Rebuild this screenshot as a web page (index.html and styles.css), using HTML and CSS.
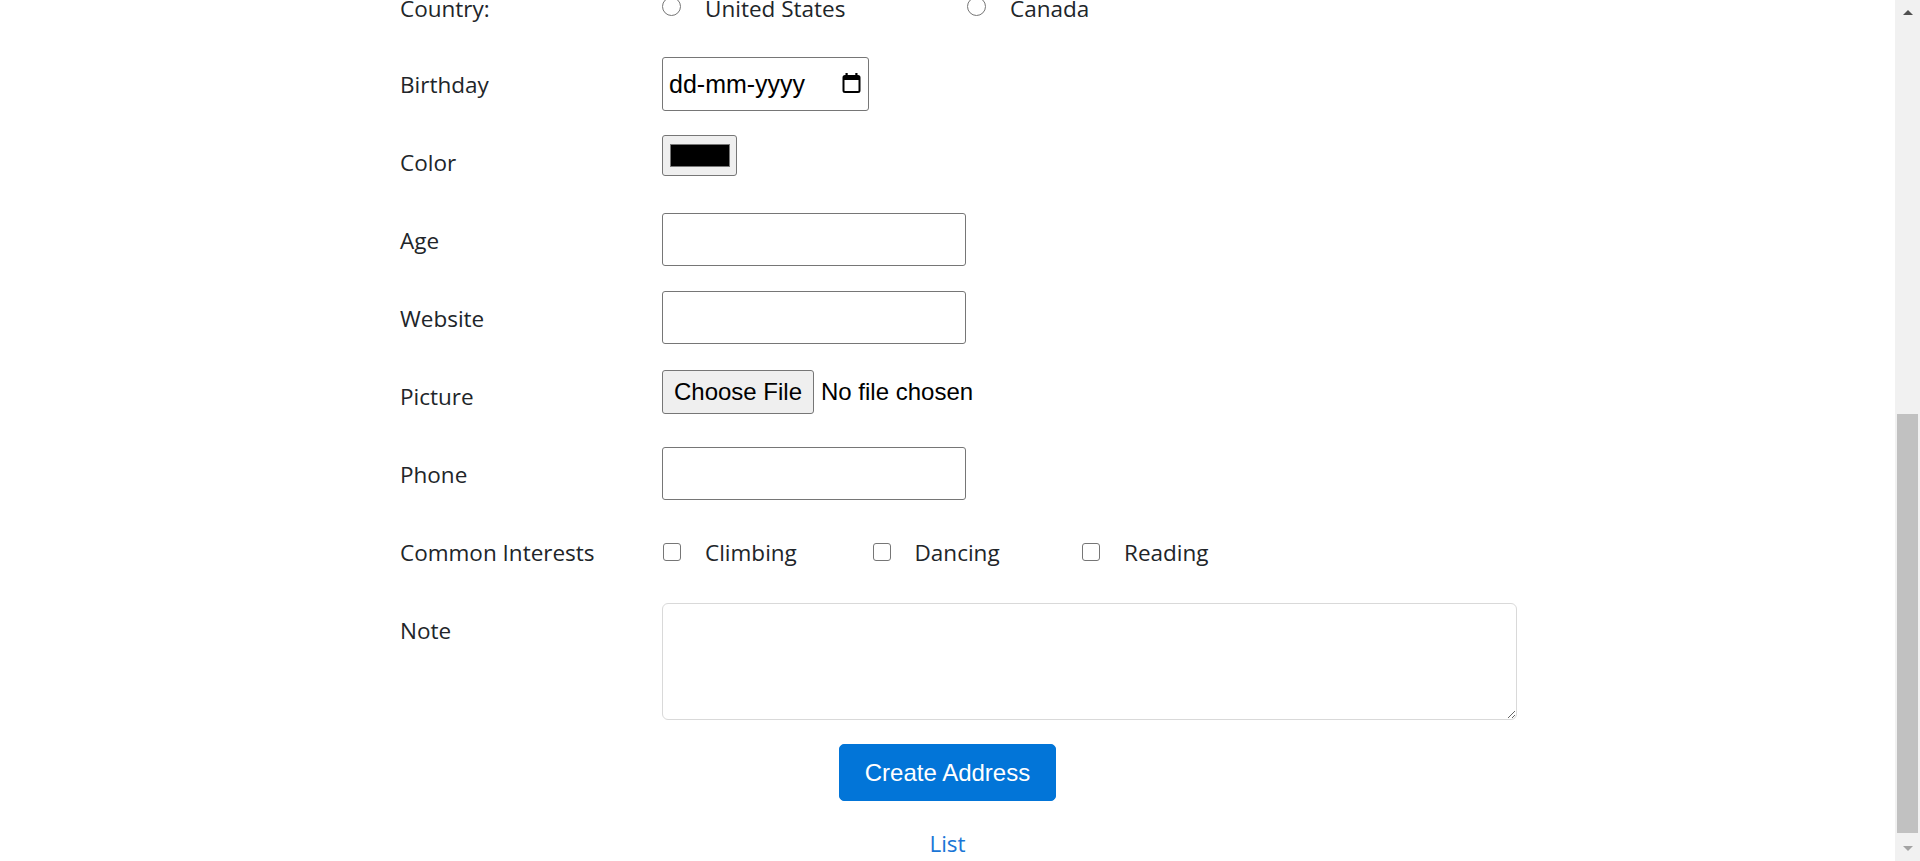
FILE: index.html
```html
<!DOCTYPE html>
<html lang="en">
<head>
<meta charset="utf-8">
<title>Create Address</title>
<link rel="stylesheet" href="styles.css">
</head>
<body>
<div class="viewport">
  <main class="content">
    <div class="container">
      <form class="address-form">
        <div class="form-row row-country">
          <label class="form-label">Country:</label>
          <div class="options">
            <label class="option option-radio"><span class="radio"></span><span class="option-text">United States</span></label>
            <label class="option option-radio"><span class="radio"></span><span class="option-text">Canada</span></label>
          </div>
        </div>
        <div class="form-row">
          <label class="form-label">Birthday</label>
          <div class="date-input">
            <span class="date-text">dd-mm-yyyy</span>
            <svg class="cal-icon" width="19" height="20" viewBox="0 0 19 20" aria-hidden="true">
              <rect x="3.5" y="0" width="2.2" height="4" fill="#000"/>
              <rect x="13.3" y="0" width="2.2" height="4" fill="#000"/>
              <rect x="1.5" y="3" width="16" height="16" rx="1.5" fill="none" stroke="#000" stroke-width="2"/>
              <rect x="1.5" y="3" width="16" height="4" fill="#000"/>
            </svg>
          </div>
        </div>
        <div class="form-row">
          <label class="form-label">Color</label>
          <div class="color-input"><span class="color-swatch"></span></div>
        </div>
        <div class="form-row">
          <label class="form-label">Age</label>
          <input class="text-input" type="text">
        </div>
        <div class="form-row">
          <label class="form-label">Website</label>
          <input class="text-input" type="text">
        </div>
        <div class="form-row">
          <label class="form-label">Picture</label>
          <div class="file-input">
            <button type="button" class="file-btn">Choose File</button>
            <span class="file-status">No file chosen</span>
          </div>
        </div>
        <div class="form-row">
          <label class="form-label">Phone</label>
          <input class="text-input" type="text">
        </div>
        <div class="form-row">
          <label class="form-label">Common Interests</label>
          <div class="options">
            <label class="option option-check"><span class="checkbox"></span><span class="option-text">Climbing</span></label>
            <label class="option option-check"><span class="checkbox"></span><span class="option-text">Dancing</span></label>
            <label class="option option-check"><span class="checkbox"></span><span class="option-text">Reading</span></label>
          </div>
        </div>
        <div class="form-row">
          <label class="form-label">Note</label>
          <textarea class="note-input"></textarea>
        </div>
        <div class="actions">
          <button type="button" class="btn-primary">Create Address</button>
        </div>
      </form>
      <div class="links"><a href="#" class="list-link">List</a></div>
    </div>
  </main>
  <div class="scrollbar">
    <div class="sb-button"><span class="sb-arrow-up"></span></div>
    <div class="sb-track"><div class="sb-thumb"></div></div>
    <div class="sb-button"><span class="sb-arrow-down"></span></div>
  </div>
</div>
</body>
</html>
```

FILE: styles.css
```css
html, body {
  margin: 0;
  padding: 0;
  height: 100%;
  overflow: hidden;
  background: #fff;
}

body {
  font-family: "Open Sans", "Noto Sans", sans-serif;
  font-size: 22.5px;
  color: #212529;
}

.viewport {
  display: flex;
  height: 861px;
}

.content {
  flex: 1;
  overflow: hidden;
  min-width: 0;
}

.container {
  width: 1095px;
  margin: -19px auto 0;
}

.form-row {
  display: flex;
  align-items: flex-start;
  min-height: 54px;
  margin-bottom: 24px;
}

.row-country {
  min-height: 52px;
}

.form-label {
  width: 262px;
  flex: none;
  padding-top: 9.5px;
  line-height: 36px;
}

.options {
  display: flex;
  padding-top: 9.5px;
}

.option {
  display: flex;
  align-items: center;
  line-height: 36px;
}

.option-radio {
  width: 305px;
}

.option-check {
  width: 209.5px;
}

.radio {
  width: 19px;
  height: 19px;
  box-sizing: border-box;
  border: 1px solid #767676;
  border-radius: 50%;
  background: #fff;
  margin-right: 24px;
  margin-bottom: 4px;
  flex: none;
}

.checkbox {
  width: 18px;
  height: 18px;
  box-sizing: border-box;
  border: 1px solid #767676;
  border-radius: 3px;
  background: #fff;
  margin-left: 1px;
  margin-right: 24px;
  margin-bottom: 2px;
  flex: none;
}

.date-input {
  width: 207px;
  height: 54px;
  flex: none;
  box-sizing: border-box;
  border: 1px solid #767676;
  border-radius: 3px;
  display: flex;
  align-items: center;
  justify-content: space-between;
  padding: 0 7px 0 6px;
  font-family: "Liberation Sans", Arial, sans-serif;
  font-size: 25px;
  color: #000;
}

.cal-icon {
  display: block;
  margin-bottom: 3px;
}

.color-input {
  width: 75px;
  height: 41px;
  flex: none;
  box-sizing: border-box;
  border: 1px solid #767676;
  border-radius: 3px;
  background: #efefef;
  display: flex;
  align-items: center;
  justify-content: center;
}

.color-swatch {
  width: 60px;
  height: 23px;
  box-sizing: border-box;
  background: #000;
  border: 1.5px solid #777;
}

.text-input {
  width: 304px;
  height: 53px;
  flex: none;
  box-sizing: border-box;
  border: 1px solid #767676;
  border-radius: 3px;
  margin: 0;
  padding: 0 6px;
  font-family: "Liberation Sans", Arial, sans-serif;
  font-size: 24px;
  background: #fff;
}

.file-input {
  display: flex;
  align-items: center;
  margin-top: 1px;
  font-family: "Liberation Sans", Arial, sans-serif;
  font-size: 24px;
  color: #000;
}

.file-btn {
  width: 152px;
  height: 44px;
  flex: none;
  box-sizing: border-box;
  border: 1px solid #767676;
  border-radius: 3px;
  background: #efefef;
  font-family: "Liberation Sans", Arial, sans-serif;
  font-size: 24px;
  color: #000;
  padding: 0;
  margin-right: 7px;
}

.note-input {
  width: 855px;
  height: 117px;
  flex: none;
  box-sizing: border-box;
  border: 1px solid #d9d9d9;
  border-radius: 6px;
  margin: 0;
  padding: 9px 18px;
  font-family: "Open Sans", sans-serif;
  font-size: 22px;
  resize: both;
}

.actions {
  display: flex;
  justify-content: center;
}

.btn-primary {
  width: 217px;
  height: 57px;
  border: 1px solid #0275d8;
  border-radius: 5px;
  background: #0275d8;
  color: #fff;
  font-family: "Liberation Sans", Arial, sans-serif;
  font-size: 24px;
  padding: 0;
}

.links {
  margin-top: 25px;
  text-align: center;
  line-height: 36px;
}

.list-link {
  color: #1a76d6;
  text-decoration: none;
}

.scrollbar {
  width: 25px;
  flex: none;
  display: flex;
  flex-direction: column;
  background: #f1f1f1;
}

.sb-button {
  height: 25px;
  flex: none;
  display: flex;
  align-items: center;
  justify-content: center;
}

.sb-arrow-up {
  width: 0;
  height: 0;
  border-left: 5.5px solid transparent;
  border-right: 5.5px solid transparent;
  border-bottom: 5px solid #505050;
}

.sb-arrow-down {
  width: 0;
  height: 0;
  border-left: 5.5px solid transparent;
  border-right: 5.5px solid transparent;
  border-top: 5px solid #a3a3a3;
}

.sb-track {
  flex: 1;
  display: flex;
  flex-direction: column;
  justify-content: flex-end;
  padding: 0 2px 3px;
}

.sb-thumb {
  height: 419px;
  background: #c1c1c1;
}
```
